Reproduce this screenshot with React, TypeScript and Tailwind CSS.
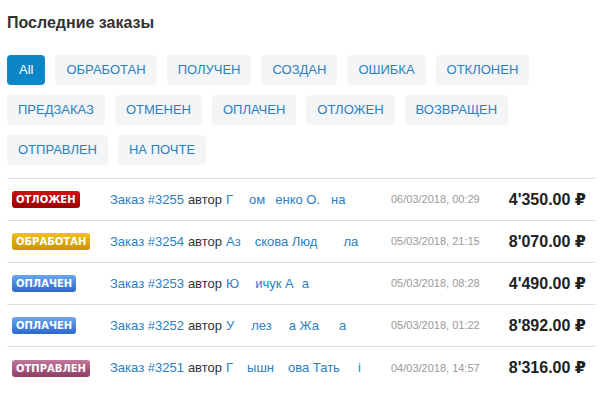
import React from "react";

const filters = [
  ["All", "ОБРАБОТАН", "ПОЛУЧЕН", "СОЗДАН", "ОШИБКА", "ОТКЛОНЕН"],
  ["ПРЕДЗАКАЗ", "ОТМЕНЕН", "ОПЛАЧЕН", "ОТЛОЖЕН", "ВОЗВРАЩЕН"],
  ["ОТПРАВЛЕН", "НА ПОЧТЕ"],
];

type Row = {
  status: string;
  badge: string;
  num: string;
  parts: [string, number][];
  date: string;
  price: string;
};

const rows: Row[] = [
  {
    status: "ОТЛОЖЕН",
    badge: "bg-gradient-to-b from-[#d41010] to-[#9a0000]",
    num: "3255",
    parts: [["Г", 0], ["ом", 16], ["енко О.", 10], ["на", 11]],
    date: "06/03/2018, 00:29",
    price: "4'350.00",
  },
  {
    status: "ОБРАБОТАН",
    badge: "bg-gradient-to-b from-[#f2c01a] to-[#c99400]",
    num: "3254",
    parts: [["Аз", 0], ["скова Люд", 14], ["ла", 26]],
    date: "05/03/2018, 21:15",
    price: "8'070.00",
  },
  {
    status: "ОПЛАЧЕН",
    badge: "bg-gradient-to-b from-[#6aa6ee] to-[#2c68cc]",
    num: "3253",
    parts: [["Ю", 0], ["ичук А", 16], ["а", 8]],
    date: "05/03/2018, 08:28",
    price: "4'490.00",
  },
  {
    status: "ОПЛАЧЕН",
    badge: "bg-gradient-to-b from-[#6aa6ee] to-[#2c68cc]",
    num: "3252",
    parts: [["У", 0], ["лез", 17], ["а Жа", 17], ["а", 20]],
    date: "05/03/2018, 01:22",
    price: "8'892.00",
  },
  {
    status: "ОТПРАВЛЕН",
    badge: "bg-gradient-to-b from-[#c0779a] to-[#8f3c66]",
    num: "3251",
    parts: [["Г", 0], ["ышн", 14], ["ова Тать", 14], ["і", 18]],
    date: "04/03/2018, 14:57",
    price: "8'316.00",
  },
];

export default function App() {
  return (
    <div
      className="w-[616px] h-[398px] bg-white overflow-hidden pl-[7px] pt-[14px]"
      style={{ fontFamily: '"Liberation Sans", Arial, "DejaVu Sans", sans-serif' }}
    >
      <h2 className="text-[16px] leading-[18px] font-bold text-[#333]">Последние заказы</h2>
      <div className="mt-[23px] flex flex-col gap-[10px]">
        {filters.map((line, i) => (
          <div key={i} className="flex gap-[10px]">
            {line.map((f) => (
              <div
                key={f}
                className={
                  f === "All"
                    ? "h-[30px] px-[12px] flex items-center rounded-[4px] bg-[#0d86c8] text-white text-[13px]"
                    : "h-[30px] px-[11px] flex items-center rounded-[4px] bg-[#f4f5f7] text-[#2b7fc0] text-[13px]"
                }
              >
                {f}
              </div>
            ))}
          </div>
        ))}
      </div>
      <div className="mt-[13px] w-[588px] border-t border-[#dddddd]">
        {rows.map((r, i) => (
          <div
            key={r.num}
            className={
              "h-[42px] flex items-center " + (i < rows.length - 1 ? "border-b border-[#dddddd]" : "")
            }
          >
            <div className="w-[103px] pl-[5px] flex">
              <span
                className={
                  "h-[17px] px-[4px] flex items-center rounded-[3px] text-white font-bold " + r.badge
                }
                style={{ fontFamily: '"DejaVu Sans", "Liberation Sans", sans-serif', fontSize: "10px" }}
              >
                {r.status}
              </span>
            </div>
            <div className="w-[281px] text-[13px] whitespace-nowrap flex items-baseline">
              <span className="text-[#2a80c3]">Заказ #{r.num}</span>
              <span className="text-[#333] ml-[4px]">автор</span>
              <span className="ml-[4px] text-[#2a80c3] flex items-baseline">
                {r.parts.map(([t, m], k) => (
                  <span key={k} style={{ marginLeft: m }}>
                    {t}
                  </span>
                ))}
              </span>
            </div>
            <div className="w-[110px] text-[11px] text-[#999]">{r.date}</div>
            <div className="flex-1 text-right pr-[9px] text-[16px] font-bold text-[#222] whitespace-nowrap">
              {r.price} <span style={{ fontFamily: '"DejaVu Sans", sans-serif' }}>₽</span>
            </div>
          </div>
        ))}
      </div>
    </div>
  );
}
